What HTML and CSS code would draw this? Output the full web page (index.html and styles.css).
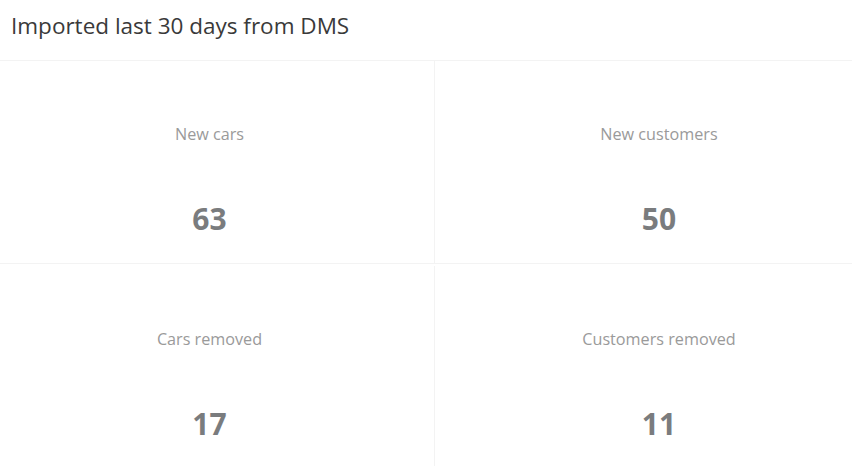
FILE: index.html
```html
<!doctype html>
<html>

<head>
  <meta charset="UTF-8">
  <title>DMS import</title>
  <link rel="stylesheet" href="styles.css">
</head>

<body>
  <div class="panel">
    <div class="panel-heading">
      <h3>Imported last 30 days from DMS</h3>
    </div>

    <div class="stats">
      <div class="stat stat-left stat-top">
        <span class="stat-label">New cars</span>
        <span class="stat-value">63</span>
      </div>
      <div class="stat stat-right stat-top">
        <span class="stat-label">New customers</span>
        <span class="stat-value">50</span>
      </div>
      <div class="stat stat-left stat-bottom">
        <span class="stat-label">Cars removed</span>
        <span class="stat-value">17</span>
      </div>
      <div class="stat stat-right stat-bottom">
        <span class="stat-label">Customers removed</span>
        <span class="stat-value">11</span>
      </div>
    </div>
  </div>
</body>

</html>
```

FILE: styles.css
```css
body {
  margin: 0;
  font-family: "Open Sans", sans-serif;
  background: #fff;
  overflow: hidden;
}

.panel-heading {
  height: 61px;
  border-bottom: 1px solid #f3f3f3;
  padding: 10px 11px 0;
  box-sizing: border-box;
}

.panel-heading h3 {
  margin: 0;
  font-size: 22.5px;
  font-weight: normal;
  line-height: normal;
  color: #3a3a3a;
}

.stats {
  display: grid;
  grid-template-columns: 435px 1fr;
}

.stat {
  display: flex;
  flex-direction: column;
  align-items: center;
  box-sizing: border-box;
  padding-top: 62px;
  height: 203px;
}

.stat-left {
  border-right: 1px solid #f3f3f3;
  padding-right: 15px;
}

.stat-right {
  padding-left: 31px;
}

.stat-top {
  border-bottom: 1px solid #f3f3f3;
}

.stat-bottom {
  margin-top: 2px;
}

.stat-label {
  font-size: 16.2px;
  line-height: 22px;
  color: #9a9a9a;
}

.stat-value {
  margin-top: 56px;
  font-size: 30px;
  font-weight: bold;
  line-height: 36px;
  color: #7a7c7e;
}
```
